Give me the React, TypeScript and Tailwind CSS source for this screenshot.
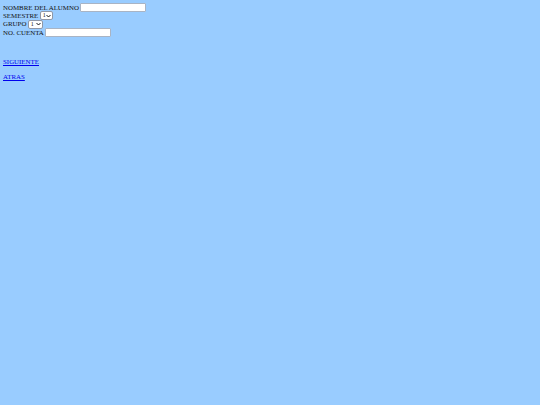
export default function App() {
  const chevron = (
    <svg
      className="pointer-events-none absolute right-[2px] top-1/2 -translate-y-1/2"
      width="5"
      height="4"
      viewBox="0 0 10 8"
    >
      <path d="M1 2 L5 6 L9 2" fill="none" stroke="#000" strokeWidth="1.8" />
    </svg>
  );

  return (
    <div className="min-h-[405px] w-[540px] bg-[#99ccff] pl-[3px] pt-[3.5px] font-['Liberation_Serif',serif] text-[6.9px] leading-[8px] text-[#111]">
      <form className="flex flex-col">
        <div className="flex h-[8.3px] items-center gap-[1px]">
          <span>NOMBRE DEL ALUMNO</span>
          <input
            type="text"
            className="h-[9px] w-[66px] rounded-[1px] border border-[#a9b4c4] bg-white outline-none"
          />
        </div>
        <div className="flex h-[8.3px] items-center gap-[1.5px]">
          <span>SEMESTRE</span>
          <span className="relative inline-block">
            <select className="h-[9px] w-[13px] appearance-none rounded-[2px] border border-[#8f98a8] bg-white pl-[2px] text-[6px] leading-[7px] outline-none">
              <option>1</option>
              <option>2</option>
              <option>3</option>
            </select>
            {chevron}
          </span>
        </div>
        <div className="flex h-[8.3px] items-center gap-[1.5px]">
          <span>GRUPO</span>
          <span className="relative inline-block">
            <select className="h-[9px] w-[15px] appearance-none rounded-[2px] border border-[#8f98a8] bg-white pl-[2px] text-[6px] leading-[7px] outline-none">
              <option>1</option>
              <option>2</option>
              <option>3</option>
            </select>
            {chevron}
          </span>
        </div>
        <div className="flex h-[8.6px] items-center gap-[1.5px]">
          <span>NO. CUENTA</span>
          <input
            type="text"
            className="h-[9px] w-[66px] rounded-[1px] border border-[#a9b4c4] bg-white outline-none"
          />
        </div>
      </form>
      <div className="mt-[20.8px]">
        <a href="#" className="text-[#0000ee] underline">
          SIGUIENTE
        </a>
      </div>
      <div className="mt-[6.8px]">
        <a href="#" className="text-[#0000ee] underline">
          ATRAS
        </a>
      </div>
    </div>
  );
}
